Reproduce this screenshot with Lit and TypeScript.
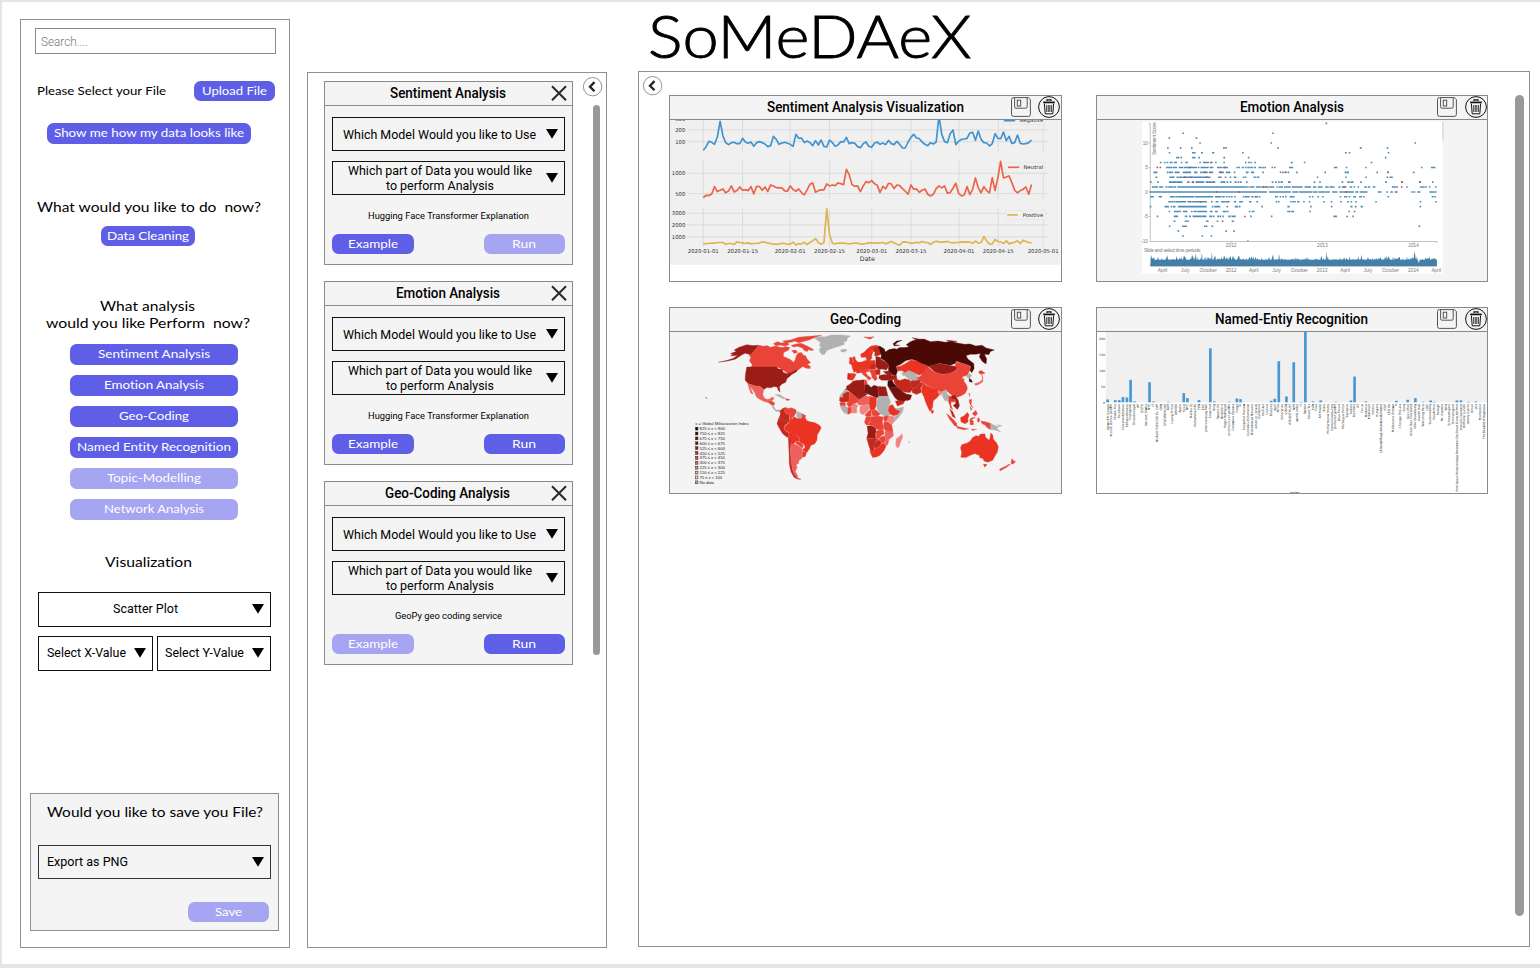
import { LitElement, html, svg, css } from "lit";
import { customElement, property } from "lit/decorators.js";

/* Label whose drawn width is set exactly, so that every caption keeps its measure. */
const label = (text: string, w: number, size: number, cls = "geo", h = 20, base = 14.4) => html`<svg
  class="label" width=${w} height=${h}><text class=${cls} x="0" y=${base} font-size=${size}
  textLength=${w} lengthAdjust="spacingAndGlyphs">${text}</text></svg>`;

const arrow = html`<svg class="arrow" width="12" height="10" viewBox="0 0 12 10"><path d="M0 0H12L6 9.8Z" /></svg>`;

const collapse = html`<svg width="20" height="20" viewBox="0 0 20 20">
  <circle cx="9.6" cy="9.7" r="9.2" fill="#fff" stroke="#666" stroke-width=".7" />
  <path d="M11.5 5.1 7 9.7l4.5 4.6" fill="none" stroke="#222" stroke-width="2.3" /></svg>`;

const cross = html`<svg width="16" height="16" viewBox="0 0 16 16">
  <path d="M1 1.3 15 15.3M15 1.3 1 15.3" fill="none" stroke="#2a2a2a" stroke-width="2" /></svg>`;

const floppy = html`<svg width="20" height="20" viewBox="0 0 20 20" fill="none" stroke="#444" stroke-width=".9">
  <path d="M2.5.6H17.4L19.4 2.6V17.4a2 2 0 0 1-2 2H2.5a2 2 0 0 1-2-2V2.5a2 2 0 0 1 2-1.9Z" />
  <path d="M3.6.6V9.8a1.4 1.4 0 0 0 1.4 1.4H14.8a1.4 1.4 0 0 0 1.4-1.4V.6" />
  <rect x="6.3" y="3.2" width="3.4" height="5.8" /></svg>`;

const bin = html`<svg width="22" height="22" viewBox="0 0 22 22" fill="none" stroke="#111">
  <circle cx="11" cy="11" r="10.4" stroke-width="1" />
  <path d="M5.2 6.4H16.8" stroke-width="1.7" /><path d="M9 5V3.9H13V5" stroke-width="1.2" />
  <path d="M6.4 7.6 7.2 17.8H14.8L15.6 7.6" stroke-width="1" />
  <path d="M8.7 9V16M10.3 9V16M11.8 9V16M13.4 9V16" stroke-width=".8" /></svg>`;

const base = css`
  :host { display: block; }
  * { box-sizing: border-box; }
  .label { display: block; flex: none; overflow: visible; font-variant-ligatures: none; }
  .geo { font-family: Lato, "Open Sans", sans-serif; }
  .rob { font-family: Roboto, sans-serif; }
  .bold { font-family: Roboto, sans-serif; font-weight: 500; }
  .btn { display: flex; justify-content: center; align-items: flex-start; height: 20.5px; border-radius: 6.5px; background: #5e5fe6; flex: none; }
  .btn text { fill: #fff; }
  .btn.off { background: #a5a5f1; }
  .select { display: flex; align-items: center; justify-content: space-between; height: 34.5px; border: 1.4px solid #111; padding: 0 7px 0 8px; }
  .arrow { display: block; flex: none; margin-top: -.6px; }
`;

/* ---------- Sentiment time series ---------- */
const negative = [183,172,156,159,165,143,96,140,160,166,160,159,163,163,147,158,162,158,171,160,157,160,164,172,169,141,150,165,161,159,162,165,171,135,147,146,160,155,160,169,154,167,152,171,173,152,160,171,167,157,158,144,163,160,162,172,175,163,158,171,174,162,158,165,161,166,153,163,166,156,165,176,176,158,144,135,146,148,158,165,169,160,164,158,80,135,157,160,133,122,166,156,150,149,147,131,129,153,125,150,160,161,170,163,133,147,148,128,154,141,162,160,137,162,164,163,160,152];
const neutral = [325,318,319,314,292,307,303,299,311,305,290,308,304,293,303,301,304,292,314,291,292,303,293,307,287,290,295,296,296,305,306,290,301,306,299,310,317,302,285,281,309,304,302,302,284,290,287,289,281,283,286,240,256,286,291,290,307,290,277,280,274,283,288,310,291,299,282,284,298,287,289,298,306,315,287,300,299,309,303,299,315,320,315,298,290,296,290,312,310,297,282,312,320,317,292,316,300,266,295,311,292,304,311,265,304,265,216,266,263,260,280,303,311,304,300,293,315,286];
const positive = [465,463,463,462,462,460,460,460,465,463,463,466,458,460,461,463,461,464,463,463,462,458,459,462,463,465,465,465,462,463,465,465,459,467,464,464,459,466,460,455,448,460,465,460,359,435,462,464,462,462,462,463,464,463,462,462,464,465,463,461,461,461,462,461,460,464,461,457,461,465,468,459,458,460,462,462,459,461,457,460,460,466,459,456,458,459,458,457,460,461,460,460,458,459,458,459,462,456,462,460,442,455,465,464,451,457,458,463,455,464,461,459,455,463,453,457,460,461];

const line = (v: number[]) => v.map((y, i) => `${(115 + (986 * i) / (v.length - 1)).toFixed(1)},${y}`).join(" ");

const days: [number, string][] = [[115,"2020-01-01"],[233,"2020-01-15"],[376,"2020-02-01"],[494,"2020-02-15"],[621,"2020-03-01"],[739,"2020-03-15"],[883,"2020-04-01"],[1001,"2020-04-15"],[1136,"2020-05-01"]];

const seriesChart = () => html`<svg class="plot" viewBox="15 93 1173 480">
  <rect x="15" y="90" width="1173" height="437" fill="#f0f0f0" />
  <g stroke="#d9d9d9" stroke-width="2.6">
    ${[122,157,252,313,372,407,443].map((y) => svg`<path d="M66 ${y}H1150" />`)}
    ${days.map(([x]) => svg`<path d="M${x} 90V187M${x} 215V330M${x} 357V472" />`)}
  </g>
  <g fill="#f0f0f0" stroke="#e2e2e2" stroke-width="1.5">
    <rect x="1014" y="80" width="128" height="26" /><rect x="1024" y="220" width="118" height="29" /><rect x="1022" y="363" width="120" height="28" /></g>
  <g fill="none" stroke-width="5" stroke-linejoin="round">
    <polyline points=${line(negative)} stroke="#3e94d1" /><path d="M1018 94H1052" stroke="#3e94d1" />
    <polyline points=${line(neutral)} stroke="#ec6347" /><path d="M1030 234H1064" stroke="#ec6347" />
    <polyline points=${line(positive)} stroke="#e1b24e" /><path d="M1028 377H1060" stroke="#e1b24e" />
  </g>
  <g class="dj" font-size="16" text-anchor="end">
    ${([[94,"300"],[128,"200"],[163,"100"],[258,"1000"],[319,"500"],[378,"3000"],[413,"2000"],[449,"1000"]] as [number,string][]).map(([y, t]) => svg`<text x="61" y=${y}>${t}</text>`)}
    <text x="1136" y="99">Negative</text><text x="1136" y="240">Neutral</text><text x="1136" y="383">Positive</text></g>
  <g class="dj" font-size="16" text-anchor="middle">
    ${days.map(([x, t]) => svg`<text x=${x} y="491">${t}</text>`)}<text x="608" y="515" font-size="19">Date</text></g>
</svg>`;

/* ---------- Emotion scatter ---------- */
let seed = 7;
const rnd = () => (seed = (seed * 16807) % 2147483647) / 2147483647;
/* score, then [from, to, number of points] runs */
const runs: [number, number[][]][] = [
  [14,[[710,711,1]]],[12,[[279,280,1],[549,550,1]]],[11,[[238,239,1],[319,320,1]]],[10,[[330,331,1],[544,545,1],[976,977,1]]],
  [9,[[233,234,1],[271,273,1],[303,307,1],[408,409,1],[564,565,1],[811,818,2],[893,894,1]]],
  [8,[[238,239,1],[308,318,3],[326,338,2],[368,374,2],[458,459,1],[779,780,1],[896,897,1]]],
  [7,[[252,276,4],[305,332,4],[402,405,2],[476,477,1],[886,888,1]]],
  [6,[[207,300,12],[315,410,11],[458,500,4],[600,608,3],[644,645,1],[845,846,1]]],
  [5,[[225,300,24],[300,370,50],[375,412,14],[430,520,17],[545,548,1],[598,608,3],[733,744,3],[770,771,1],[828,829,1],[996,997,1],[1026,1038,4]]],
  [4,[[190,204,4],[230,270,10],[280,368,30],[385,438,12],[470,520,6],[575,625,4],[705,707,1],[760,776,5],[862,863,1],[895,896,1],[972,973,1]]],
  [3,[[195,204,2],[230,252,9],[262,362,44],[380,440,8],[460,517,6],[683,684,1],[768,769,1],[828,829,1],[890,912,5]]],
  [2,[[182,183,1],[204,206,1],[235,380,42],[390,490,12],[515,600,6],[664,820,8],[888,890,2],[937,938,1],[990,991,1],[1029,1030,1]]],
  [1,[[188,222,16],[228,285,40],[285,360,140],[360,440,60],[440,535,44],[540,665,50],[670,810,30],[825,960,12],[990,1042,6]]],
  [0,[[182,225,30],[225,430,340],[430,530,120],[540,665,80],[670,770,28],[770,845,26],[860,922,10],[960,996,6],[1020,1042,8]]],
  [-1,[[182,222,6],[235,285,20],[285,360,60],[360,440,26],[450,512,12],[545,615,10],[650,700,4],[735,830,12],[895,897,1],[1026,1042,3]]],
  [-2,[[228,290,18],[290,350,40],[360,440,16],[450,510,8],[542,660,9],[700,800,7],[858,860,1],[992,993,1],[1038,1040,1]]],
  [-3,[[182,183,1],[225,290,24],[285,350,50],[362,390,8],[410,475,6],[516,517,1],[595,608,3],[663,664,1],[725,727,1],[770,830,5],[992,993,1]]],
  [-4,[[236,300,14],[305,350,24],[360,430,9],[468,492,4],[574,622,4],[660,661,1],[768,803,3]]],
  [-5,[[202,203,1],[250,305,10],[310,350,28],[354,440,14],[482,484,1],[545,546,1],[733,742,4],[790,791,1]]],
  [-6,[[250,255,2],[275,310,3],[335,390,4],[424,434,2]]],[-7,[[238,239,1],[268,290,3],[342,370,4]]],[-8,[[265,266,1],[408,409,1],[432,433,1]]],[-9,[[279,280,1],[337,338,1],[364,365,1]]],
];
const dotY = (s: number) => 308 - s * 14.7;
const dots = runs.map(([s, list]) => list.map(([a, b, n]) => Array.from({ length: n }, () => `M${(a + (b - a) * rnd() - 2.3).toFixed(1)} ${dotY(s).toFixed(1)}h4.8`).join("")).join("")).join("");
const redDots = ([[402,9],[768,8],[364,6],[202,5],[211,5],[300,5],[405,5],[526,5],[555,5],[345,4],[394,4],[572,4],[588,4],[895,4],[285,3],[302,3],[350,3],[407,3],[893,3],[310,2],[600,2],[936,2],[992,2],[520,1],[530,1],[763,1],[936,1],[380,0],[448,0],[770,0],[921,0],[497,-1],[332,-2],[465,-5],[772,-5],[398,-6],[989,-7]] as number[][]).map(([x, s]) => `M${x - 2} ${dotY(s)}h4.6`).join("");
const peaks: Record<number, number> = { 318: 492, 336: 490, 366: 488, 550: 496, 568: 494, 710: 486, 816: 496, 890: 499, 974: 489, 976: 492, 988: 522, 986: 516 };
const area = "M181 529" + Array.from({ length: 431 }, (_, i) => { const x = 182 + i * 2; const r = rnd(); return `L${x} ${peaks[x] ?? (x < 480 ? 512 - r * r * r * 15 : 512 - r * r * r * r * 11).toFixed(1)}`; }).join("") + "V529Z";

const scatterChart = () => html`<svg class="plot" viewBox="21 93 1173 480">
  <rect x="156" y="97" width="903" height="456" fill="#fff" />
  <path d="M1060 97V153" stroke="#ccc" stroke-width="3" />
  <path d="M176 102H181V457H1042V462M176 161H181M176 235H181M176 308H181M176 382H181M424 457V462M698 457V462M973 457V462" fill="none" stroke="#999" stroke-width="1.8" />
  <path d="M472 454.5h5" stroke="#3a6f95" stroke-width="2" />
  <path d=${dots} stroke="#2f77a8" stroke-opacity=".85" stroke-width="4.8" /><path d=${redDots} stroke="#b94a55" stroke-width="4.6" />
  <path d=${area} fill="#427fa9" /><path d="M181 530H1042" stroke="#2d5a84" stroke-width="3" />
  <g class="ax" font-size="14" text-anchor="end"><text x="174" y="166">10</text><text x="174" y="240">5</text><text x="174" y="313">0</text><text x="174" y="387">-5</text><text x="174" y="462">-10</text></g>
  <g class="ax" font-size="14.5" text-anchor="middle">
    <text transform="translate(197 148) rotate(-90)" textLength="98">Sentiment Score</text>
    <text x="424" y="474">2012</text><text x="698" y="474">2013</text><text x="972" y="474">2014</text>
    <text x="248" y="489" textLength="172">Slide and select time periods:</text>
    ${["April","July","October","2012","April","July","October","2013","April","July","October","2014","April"].map((t, i) => svg`<text x=${218 + i * 68.5} y="548">${t}</text>`)}
  </g></svg>`;

/* ---------- World map ---------- */
const K = { a: "#4b0906", b: "#75130f", c: "#9b1d16", d: "#c4291e", e: "#ea3323", f: "#ea4439", g: "#ec615d", h: "#f08583", n: "#b1b1b1" } as Record<string, string>;
/* West half, drawn in map units */
const west: [string, string][] = [
  ["c","281,135 262,136 245,133 222,141 207,149 213,154 196,160 203,163 196,167 217,165 205,174 184,181 160,186 188,182 210,177 232,163 240,159 248,161 256,163 259,163"],
  ["f","281,135 295,138 305,136 318,141 330,137 342,140 352,142 362,139 375,142 370,150 356,157 355,169 366,173 376,178 386,186 391,178 394,166 400,158 410,157 414,164 421,166 428,178 437,187 427,193 436,198 436,205 424,204 413,199 404,206 392,212 380,216 369,220 356,211 346,204 335,200 258,200 262,194 253,182 257,172 251,162 258,162"],
  ["f","325,130 337,124 350,128 368,126 372,133 360,137 344,134 334,137"],["f","353,122 380,118 400,111 432,108 470,105 452,111 434,118 418,123 400,127 390,122 378,126 360,127"],
  ["f","378,136 394,131 408,129 420,134 434,141 447,149 438,151 432,147 427,154 418,151 412,143 398,138 385,140"],["f","380,151 392,149 398,156 388,160"],
  ["c","245,200 335,200 340,206 352,207 354,216 366,221 380,216 398,208 394,215 381,222 373,230 366,235 362,246 350,252 343,260 345,276 339,269 337,261 327,259 318,263 305,262 297,268 290,263 284,258 273,258 260,254 249,250 240,240 241,222"],
  ["g","248,251 260,254 273,258 284,258 290,263 296,269 293,283 297,293 306,298 314,297 320,291 327,292 324,300 317,302 309,307 297,304 281,296 273,289 269,278 260,264 255,259 264,282 258,280 252,265"],
  ["f","309,306 318,302 329,308 327,316 318,314"],["n","320,316 327,320 333,330 343,329 349,333 340,335 333,334 324,325"],["n","330,284 344,283 352,289 362,295 356,297 343,290"],["f","363,296 375,298 371,301 362,300"],
  ["n","448,113 462,109 482,109 500,104 530,104 558,107 548,113 546,122 537,126 539,132 526,137 513,141 498,146 487,150 479,162 471,163 465,155 463,146 469,141 463,135 467,128 460,121"],
  ["n","527,149 536,147 546,148 544,153 534,156 528,153"],
  ["d","345,332 353,325 361,322 358,332 362,340 373,343 373,355 372,369 363,362 350,360 342,353 346,343"],["f","361,322 370,325 380,323 393,329 394,336 388,347 382,354 375,356 373,343 362,340 358,332"],["n","395,334 404,337 413,341 411,355 400,356 395,350"],["f","412,341 423,347 418,357 411,355"],
  ["e","375,356 383,356 388,350 397,356 410,355 420,352 425,361 435,365 448,367 463,375 469,383 462,397 457,405 456,421 449,432 438,436 433,447 424,460 413,449 421,442 417,433 405,427 404,414 389,402 374,397 364,394 357,385 364,374 372,370"],
  ["d","341,354 350,360 363,362 370,369 360,375 356,386 364,395 371,398 371,410 366,412 353,401 343,385 336,371"],["e","371,398 378,396 390,403 403,415 404,424 393,424 386,432 377,431 371,414"],["f","393,424 404,426 415,435 413,445 404,438 392,430"],
  ["d","370,411 374,418 378,433 376,451 377,467 379,487 383,511 389,524 398,535 408,538 399,538 387,532 378,516 373,492 372,455"],["g","378,433 386,431 394,434 406,441 412,448 411,464 412,474 402,482 401,490 393,495 397,502 391,514 400,532 391,528 384,513 379,488 377,455"],["e","413,452 424,461 420,471 412,470"],
  ["f","121,290 126,295 122,294"],
  ["e","564,171 570,169 572,178 578,185 578,192 564,195 569,187 564,180"],["e","555,180 563,180 560,190 553,190"],["e","566,202 577,199 588,191 596,196 600,212 590,217 576,219 572,208"],["e","550,220 566,220 574,222 569,233 563,240 553,239"],["d","549,220 554,221 554,238 548,237"],
  ["d","550,259 564,243 576,240 570,250 560,260 549,268 539,270"],["n","539,270 548,268 547,280 535,290 524,291 530,280"],["d","535,282 548,275 554,276 552,305 530,306 524,302 525,292 535,291"],["f","555,277 582,297 583,304 569,310 561,318 552,321 545,310 552,305"],
  ["n","526,318 541,318 548,322 549,341 540,340 532,331"],["f","525,307 540,306 543,317 526,316"],["f","549,322 560,321 560,338 549,343"],["h","560,316 570,309 580,318 576,323 576,339 562,339"],["g","582,299 603,287 616,290 613,313 595,315 583,315 576,309"],
];
/* East half, measured from x = 555 */
const east: [string, string][] = [
  ["c","-10,258 5,250 22,241 43,239 44,253 46,277 52,283 30,297 27,297 -8,269"],["f","44,239 50,240 53,251 45,255"],["b","45,254 55,253 64,262 73,255 84,259 86,292 80,293 60,284 46,278"],["c","85,259 101,260 108,260 115,288 86,288"],["e","61,289 80,293 80,315 74,328 62,331 58,315"],
  ["n","86,289 116,288 123,306 118,317 117,330 121,345 107,349 92,341 82,327 80,314"],["e","119,318 128,313 136,325 153,333 144,344 131,347 121,342 116,331"],["n","137,327 162,321 158,337 145,354 134,365 134,350 146,344 154,334"],["h","31,318 44,314 59,317 58,327 49,338 39,344 30,337"],["f","50,340 59,330 64,332 65,347 51,350 45,345"],["f","65,332 77,328 92,342 84,348 68,347"],["f","49,351 64,349 61,363 51,376 44,367"],
  ["f","64,350 84,348 101,351 98,366 102,389 91,389 80,388 76,381 67,377 53,374 61,366"],["h","115,347 133,349 133,366 126,373 114,362"],["f","102,349 115,347 113,361 103,364"],["f","103,366 113,364 126,374 130,395 118,397 106,390 101,380"],["c","52,378 66,378 77,383 79,394 77,404 79,416 51,415 55,400"],["d","51,416 86,417 78,424 75,441 71,455 63,453 57,436"],["d","80,423 88,419 96,429 87,441 76,446 76,432"],["f","79,394 90,389 102,391 103,402 92,409 87,417 80,415"],["f","93,410 105,408 108,419 103,429 96,428 88,418"],["g","107,391 130,396 131,408 118,418 115,432 108,440 106,429 108,417 105,406"],
  ["e","60,452 71,455 76,446 87,442 96,431 105,430 108,442 102,453 91,466 80,471 69,473 64,463"],["h","138,431 140,416 151,408 157,401 159,410 153,427 147,443 141,442"],["h","177,424 181,427 178,429"],
  ["b","117,262 135,261 152,265 161,276 173,283 185,285 179,296 161,304 145,301 136,293 128,280"],["d","137,303 150,302 165,303 161,311 143,318"],["b","174,283 186,285 182,298 171,302"],["a","115,242 127,239 132,250 146,262 135,261 119,263 114,257"],["c","88,226 104,223 121,226 140,225 142,237 127,239 112,240 96,240 88,235"],["d","132,233 150,241 166,236 181,240 185,253 188,267 182,277 167,276 153,270 142,258 134,248"],["d","182,244 191,239 214,239 211,249 201,262 187,264"],["d","187,266 202,261 213,246 221,250 213,263 215,276 201,283 188,277"],
  ["n","157,215 166,219 177,211 193,217 209,231 219,227 215,237 196,241 180,239 166,227 158,225"],["e","139,199 152,198 168,190 184,179 207,183 225,194 237,199 230,212 220,221 208,225 192,216 177,210 166,218 157,211 147,212"],
  ["a","83,137 91,138 104,146 107,155 118,148 134,145 141,147 150,142 163,142 178,140 170,133 180,126 189,121 203,118 223,116 243,124 266,122 287,126 304,123 324,128 345,132 362,131 379,137 398,135 410,143 435,149 423,154 419,163 405,162 412,176 410,191 399,184 390,170 393,160 378,162 363,162 350,166 355,176 364,183 373,190 374,205 367,218 361,209 364,199 350,192 336,188 321,182 318,189 302,195 286,192 270,189 254,194 237,198 214,188 204,182 187,177 169,181 152,193 138,198 144,211 139,225 120,222 116,206 118,195 103,180 93,175 95,165 87,154"],
  ["a","130,130 141,122 157,120 144,126 135,133 150,135 134,137"],["b","188,112 220,118 200,119"],["b","291,120 323,123 305,125"],["f","42,110 60,111 73,109 61,117"],
  ["c","237,198 254,194 270,190 286,193 302,196 316,198 325,202 317,212 300,220 278,222 257,216"],["f","202,235 214,227 224,212 235,200 256,217 279,223 302,220 319,212 325,203 317,199 319,185 336,189 350,193 363,200 360,213 354,225 340,229 338,237 345,235 343,242 352,256 354,266 347,280 335,287 324,291 316,289 303,282 290,270 278,272 264,268 245,263 229,253 218,247"],
  ["e","216,276 216,262 222,249 230,256 247,264 270,268 282,270 271,282 263,292 251,303 249,322 241,334 236,324 228,306 223,290"],["e","246,327 253,334 249,340 245,338"],["h","265,270 276,274 275,286 266,281"],["n","277,276 289,268 293,280 301,289 297,298 298,308 292,301 286,302 280,291"],
  ["e","298,288 307,289 316,295 316,306 305,304 304,315 310,329 303,323 298,306"],["c","306,287 316,285 326,300 330,317 324,328 311,316 319,310 317,297 307,294"],["d","301,326 310,335 318,354 309,349"],["f","291,341 300,347 313,360 322,370 323,379 315,377 301,358"],["f","321,379 341,383 358,387 342,389 323,384"],["e","333,353 344,347 354,337 359,345 355,356 356,365 347,371 335,366"],["f","361,358 367,353 378,352 366,359 374,365 370,366 374,373 363,375"],["e","386,352 391,358 388,367 384,363"],["g","365,387 382,388 369,392"],
  ["f","359,299 367,298 365,314 372,323 366,319 361,310"],["f","370,339 379,331 384,340 379,348 370,343"],["f","361,319 368,327 365,331"],["f","394,363 408,365 424,370 424,389 412,382 407,375 398,371"],["n","424,370 437,376 447,382 443,386 455,396 440,391 424,388"],["n","443,374 459,377 448,380"],["g","375,251 390,246 399,238 397,220 401,234 400,245 389,252 379,256"],["f","388,213 397,211 407,219 395,222 389,219"],["n","351,228 361,220 367,225 361,235 354,233"],["a","359,235 366,239 369,246 360,245"],["g","358,278 362,282 360,290"],
  ["e","334,472 337,458 333,443 337,434 353,429 363,423 369,413 379,407 388,409 393,402 407,402 408,411 419,421 422,415 424,399 430,404 432,418 442,429 447,440 444,456 436,470 430,481 415,487 404,483 400,475 391,474 391,467 376,461 361,467 349,473"],["e","402,492 413,494 406,502"],["f","488,476 492,482 499,485 491,493 485,490"],["f","484,493 472,502 452,513 451,507 469,499 478,494"],
  ["e","32,162 42,157 54,145 64,137 80,135 88,139 77,142 65,150 58,162 60,174 52,182 48,170 35,172"],["d","68,147 80,139 88,144 92,163 80,168 74,165 76,156 70,152"],["e","57,164 66,149 71,153 66,165 66,175 57,183 54,177"],["c","78,169 91,171 94,178 105,184 119,196 110,209 97,206 85,208 77,197 79,184"],["e","22,186 36,185 49,180 77,181 77,201 67,208 45,209 37,202 23,205"],["d","67,192 77,196 78,206 67,207 60,202"],["f","28,209 54,207 59,214 47,216 53,225 65,234 57,240 51,232 40,224 36,217"],["f","59,210 75,208 86,209 89,222 79,224 83,236 76,242 67,232 65,222"],["d","77,209 91,208 91,222 79,222"],["c","101,214 118,212 128,220 122,229 110,222"],
  ["e","4,188 19,182 26,190 24,210 13,217 8,205"],["e","-1,172 7,172 9,193 2,192"],
];
const poly = ([k, pts]: [string, string]) => svg`<polygon points=${pts} fill=${K[k]} stroke=${K[k]} />`;
const legend: [string, string][] = [["#150000","825 ≤ x < 900"],["#330302","750 ≤ x < 825"],["#5d0c0a","675 ≤ x < 750"],["#75130f","600 ≤ x < 675"],["#9b1d16","525 ≤ x < 600"],["#c4291e","450 ≤ x < 525"],["#ea4439","375 ≤ x < 450"],["#ec615d","300 ≤ x < 375"],["#f08583","225 ≤ x < 300"],["#f5acaa","150 ≤ x < 225"],["#fbd5d4","75 ≤ x < 150"],["#b1b1b1","No data"]];
const worldMap = () => html`<svg class="plot" viewBox="15 95 1173 483">
  <g stroke-width="1" stroke-linejoin="round">${west.map(poly)}<g transform="translate(555 0)">${east.map(poly)}</g></g>
  <text class="lg" x="90" y="375" font-size="12" textLength="160">x = Global Militarization Index</text>
  ${legend.map(([c, t], i) => svg`<rect x="91" y=${381.5 + i * 14.7} width="7" height="8.5" fill=${c} stroke="#222" stroke-width="1.5" /><text class="lg" x="103" y=${390.5 + i * 14.7} font-size="13" textLength=${t === "No data" ? 43 : i === 10 ? 68 : 76}>${t}</text>`)}
</svg>`;

/* ---------- Entity bars ---------- */
const names = "News API Google|ArcGIS Online Graffiti|Media Fire|Facebook|ClevelandStation|ElMayorReason|Instagram|FivelaSenegal|AP|QOTD|Nauset, Elwha|NYC|IT|NUEVO ROSCOE EL CAP|CNN|STOCKBRIDGE|BLM|Luang Prince|ARMED|Apple|Excel|NFC|Malibu DJ|Muhammad Ali|YEN|EDC|Johannesburg Mall|Snapchat|Bing|Tweets 50|Wild Bill 5|Roger Rodriguez|architectural graffiti|Delaware Obama|Forge|Xi|Snapshot Review|Cannabis-Entertainm|Mohammed Navarra|america canada|Sundance|YouTube|Dennis|Blue Jay|April|Africa|Enterprise|VISION|ATMOSTRUST|NPR|world order|IT|Twitter|Street Tax|SUN|Fuse|Alt Model|Stats|Philharmonia Metro|GameCommunity|pinterest graffiti|Blue Forest|Montague Police|Synopsis|Fedora|Biennale|KT|Focus|Moderna|Kilimanjar|Politics|Hungary|LA Senda/Tikaglu Onukdlane Kickmaker|ICEF|CEO EV|Melbourne Ottawa|V|Chicago Tribune|Song|Gas Lifton|Green Box Cleveland|Mike Bloomberg|Health Hub|Watching Paris|UGC|Sustainability|MacArthur|Raleigh|Mr. Gamble|Wild|Schroedingers|Technological|Paris Space Poster Vintage Panorama City Street Scene Art Print|Daniels Diplomat|Anthony Lundin|Jimmy Giants|Oliver|Vox|Montpelier|Seattle Tax|The Bluebird of Happiness".split("|");
const tickX = (i: number) => i < 72 ? 55 + i * 11.42 : 878 + (i - 72) * 11.4;
const nameLen: Record<number, number> = { 13: 115, 31: 72, 32: 96, 72: 148, 92: 264 };
const bars: [number, number][] = [[52,298],[75,300],[87,300],[98,291],[110,292],[121,239],[133,304],[178,246],[190,304],[235,305],[281,279],[292,294],[327,300],[361,144],[373,304],[418,305],[441,295],[452,297],[544,302],[555,296],[567,183],[590,289],[612,186],[635,305],[647,90],[670,304],[693,301],[738,305],[784,301],[795,229],[829,304],[921,302],[955,299],[978,294],[1001,305],[1024,301],[1035,305],[1103,301],[1115,301],[1138,305],[1160,304]];
const tick = (x: number, t: string, len?: number) => len
  ? svg`<text transform="translate(${x} 311) rotate(-90)" textLength=${len}>${t}</text>`
  : svg`<text transform="translate(${x} 311) rotate(-90)">${t}</text>`;
const entityChart = () => html`<svg class="plot" viewBox="21 95 1173 483">
  <rect x="21" y="95" width="1173" height="484" fill="#fff" /><rect x="46" y="95" width="1148" height="212" fill="#f0f0f0" />
  ${bars.map(([x, y]) => svg`<rect x=${x - 4} y=${y} width="8" height=${306.5 - y} fill="#4997d3" />`)}
  <g class="dj" font-size="9.5" text-anchor="end">${["200","150","100","50","0"].map((t, i) => svg`<text x="44" y=${119 + i * 48}>${t}</text>`)}</g>
  <g class="tick" text-anchor="end">${names.slice(0, 99).map((t, i) => tick(tickX(i), t, nameLen[i]))}${tick(1187, names[100], 106)}</g>
  <text class="dj" x="600" y="583" font-size="11">index</text>
</svg>`;

@customElement("analysis-card")
class AnalysisCard extends LitElement {
  @property() name = "";
  @property({ type: Number }) nameWidth = 116;
  @property() note = "";
  @property({ type: Number }) noteWidth = 161;
  @property({ type: Boolean }) exampleOff = false;
  @property({ type: Boolean }) runOff = false;
  static styles = [base, css`
    .card { width: 249px; height: 184px; border: 1.4px solid #8a8a8a; background: #f4f4f4; }
    header { height: 24px; border-bottom: 1.4px solid #8a8a8a; display: grid; grid-template-columns: 1fr 16px; align-items: center; padding: 0 5px 0 0; }
    header .label { justify-self: center; margin-left: 19px; }
    .body { padding: 11px 7px 0 7px; display: flex; flex-direction: column; }
    .select { padding: 0 6.5px 0 10px; margin-bottom: 9.5px; }
    .two { padding-left: 15px; }
    .lines { display: flex; flex-direction: column; align-items: center; }
    .note { display: flex; justify-content: center; height: 20px; }
    .row { display: flex; justify-content: space-between; margin-top: 9px; }
    .row .btn { width: 81.5px; }
  `];
  render() {
    return html`<section class="card">
      <header>${label(this.name, this.nameWidth, 14, "bold", 22, 16)}${cross}</header>
      <div class="body">
        <div class="select">${label("Which Model Would you like to Use", 193, 13, "rob", 20, 15)}${arrow}</div>
        <div class="select two"><div class="lines">${label("Which part of Data you would like", 184, 13, "rob", 15, 12)}${label("to perform Analysis", 108, 13, "rob", 15, 12)}</div>${arrow}</div>
        <div class="note">${label(this.note, this.noteWidth, 9.6, "rob", 20, 14)}</div>
        <div class="row">
          <div class="btn ${this.exampleOff ? "off" : ""}">${label("Example", 50, 12.3)}</div>
          <div class="btn ${this.runOff ? "off" : ""}">${label("Run", 24, 12.3)}</div>
        </div>
      </div></section>`;
  }
}

@customElement("chart-card")
class ChartCard extends LitElement {
  @property() name = "";
  @property({ type: Number }) nameWidth = 100;
  @property({ attribute: false }) chart: unknown;
  @property({ type: Boolean }) white = false;
  static styles = [base, css`
    .card { width: 392.5px; height: 187px; border: 1.4px solid #8a8a8a; background: #f4f4f4; display: flex; flex-direction: column; }
    .card.white { background: #fff; }
    header { height: 24.5px; flex: none; background: #f4f4f4; border-bottom: 1.4px solid #8a8a8a; display: grid; grid-template-columns: 1fr 20px 22px; column-gap: 7.5px; align-items: center; padding-right: .5px; }
    header > svg { margin-top: -.5px; }
    header .label { justify-self: center; margin-left: 57px; }
    .plot { display: block; width: 100%; flex: 1; min-height: 0; overflow: hidden; }
    .dj { font-family: "DejaVu Sans", sans-serif; fill: #333; }
    .ax { font-family: "Liberation Sans", sans-serif; fill: #777; }
    .lg { font-family: "Liberation Sans", sans-serif; fill: #222; }
    .tick { font-family: "DejaVu Sans", sans-serif; font-size: 9.3px; fill: #222; }
  `];
  render() {
    return html`<section class="card ${this.white ? "white" : ""}">
      <header>${label(this.name, this.nameWidth, 14, "bold", 22, 15.5)}${floppy}${bin}</header>${this.chart}</section>`;
  }
}

@customElement("app-root")
class AppRoot extends LitElement {
  static styles = [base, css`
    .page { width: 1540px; height: 968px; overflow: hidden; background: #fff; border: solid #e5e5e5; border-width: 2px 0 4px 2px; display: flex; align-items: flex-start; }
    .panel { border: 1.4px solid #8f8f8f; background: #fff; flex: none; }
    .side { width: 270px; height: 929px; margin: 17px 0 0 18px; display: flex; flex-direction: column; align-items: flex-start; }
    .search { width: 241px; height: 26px; margin: 8px 0 0 14px; border: 1.4px solid #888; padding-left: 5px; }
    .search text { fill: #777; font-weight: 300; }
    .file { margin: 26.7px 0 0 16.3px; display: flex; align-items: flex-start; gap: 27.5px; }
    .upload { width: 81.5px; }
    .show { width: 204px; margin: 22.3px 0 0 26px; }
    .q1 { margin: 53px 0 0 15.5px; }
    .clean { width: 93.5px; margin: 9px 0 0 80px; }
    .q2 { margin: 51.3px 0 0 25.3px; width: 204px; display: flex; flex-direction: column; align-items: center; }
    .q2 .label:first-child { margin-left: -2px; }
    .list { margin: 12.5px 0 0 49.2px; display: flex; flex-direction: column; gap: 10.5px; }
    .list .btn { width: 168px; }
    .viz { margin: 32.7px 0 0 84px; }
    .pick { width: 233px; margin: 20px 0 0 17px; }
    .pick .select { padding-right: 6px; }
    .scatter { padding-left: 74px; }
    .pair { display: flex; gap: 4px; margin-top: 9.5px; }
    .pair .select { flex: 1; padding: 0 6px 0 7.5px; }
    .pick .label, .save .select .label { margin-top: -1px; }
    .save { width: 249px; height: 138px; margin: 122.5px 0 0 9px; border: 1.4px solid #8f8f8f; background: #f4f4f4; padding: 7.5px 7px 0 7px; display: flex; flex-direction: column; }
    .save > .label { margin-left: 8.5px; }
    .save .select { margin-top: 23px; border-color: #333; padding: 0 6px 0 7.5px; }
    .save .btn { width: 81.5px; margin: 22.5px 2px 0 0; align-self: flex-end; }
    .mid { width: 300px; height: 876px; margin: 70px 0 0 17px; display: flex; }
    .cards { display: flex; flex-direction: column; gap: 16px; padding: 7.7px 0 0 16px; }
    .rail { margin: 4px 0 0 9.5px; display: flex; flex-direction: column; align-items: center; width: 20px; }
    .rail i { width: 7px; height: 550px; border-radius: 4px; background: #999; margin: 7.5px 0 0 7.5px; }
    .main { margin: 11px 0 0 31px; width: 893px; display: flex; flex-direction: column; flex: none; }
    .title { height: 58px; padding-left: 9.5px; }
    .title text { font-weight: 300; stroke: #000; stroke-width: .9px; }
    .board { width: 892px; height: 876px; display: flex; align-items: flex-start; }
    .board > svg { margin: 4px 0 0 4px; flex: none; }
    .grid { display: grid; grid-template-columns: 392.5px 392.5px; gap: 25px 34px; margin: 22.6px 0 0 6px; }
    .board i { width: 9px; height: 821px; border-radius: 5px; background: #999; margin: 23px 0 0 27px; }
  `];
  render() {
    const jobs: [string, number, boolean][] = [["Sentiment Analysis",112,false],["Emotion Analysis",100,false],["Geo-Coding",70,false],["Named Entity Recognition",154,false],["Topic-Modelling",94,true],["Network Analysis",100,true]];
    return html`<div class="page">
      <aside class="panel side">
        <div class="search">${label("Search....", 47, 12.5, "rob", 24, 16.5)}</div>
        <div class="file">${label("Please Select your File", 129, 12.3)}<div class="btn upload">${label("Upload File", 65, 12.3)}</div></div>
        <div class="btn show">${label("Show me how my data looks like", 190, 12.3)}</div>
        <div class="q1">${label("What would you like to do\u00a0 now?", 224, 14.3, "geo", 20, 15)}</div>
        <div class="btn clean">${label("Data Cleaning", 82, 12.3)}</div>
        <div class="q2">${label("What analysis", 95, 14.3, "geo", 17, 13)}${label("would you like Perform\u00a0 now?", 204, 14.3, "geo", 17, 13)}</div>
        <div class="list">${jobs.map(([t, w, off]) => html`<div class="btn ${off ? "off" : ""}">${label(t, w, 12.3)}</div>`)}</div>
        <div class="viz">${label("Visualization", 87, 14.3, "geo", 20, 15)}</div>
        <div class="pick">
          <div class="select scatter">${label("Scatter Plot", 65, 13, "rob")}${arrow}</div>
          <div class="pair"><div class="select">${label("Select X-Value", 79, 13, "rob")}${arrow}</div><div class="select">${label("Select Y-Value", 79, 13, "rob")}${arrow}</div></div>
        </div>
        <div class="save">
          ${label("Would you like to save you File?", 216, 14.3, "geo", 20, 14.5)}
          <div class="select">${label("Export as PNG", 81, 13, "rob")}${arrow}</div>
          <div class="btn off">${label("Save", 27, 12.3)}</div>
        </div>
      </aside>
      <section class="panel mid">
        <div class="cards">
          <analysis-card name="Sentiment Analysis" .nameWidth=${116} note="Hugging Face Transformer Explanation" .noteWidth=${161} .runOff=${true}></analysis-card>
          <analysis-card name="Emotion Analysis" .nameWidth=${104} note="Hugging Face Transformer Explanation" .noteWidth=${161}></analysis-card>
          <analysis-card name="Geo-Coding Analysis" .nameWidth=${125} note="GeoPy geo coding service" .noteWidth=${107} .exampleOff=${true}></analysis-card>
        </div>
        <div class="rail">${collapse}<i></i></div>
      </section>
      <main class="main">
        <div class="title">${label("SoMeDAeX", 323.5, 58.5, "geo", 58, 45)}</div>
        <section class="panel board">
          ${collapse}
          <div class="grid">
            <chart-card name="Sentiment Analysis Visualization" .nameWidth=${197} .chart=${seriesChart()} .white=${true}></chart-card>
            <chart-card name="Emotion Analysis" .nameWidth=${104} .chart=${scatterChart()}></chart-card>
            <chart-card name="Geo-Coding" .nameWidth=${71} .chart=${worldMap()}></chart-card>
            <chart-card name="Named-Entiy Recognition" .nameWidth=${153} .chart=${entityChart()} .white=${true}></chart-card>
          </div>
          <i></i>
        </section>
      </main>
    </div>`;
  }
}
